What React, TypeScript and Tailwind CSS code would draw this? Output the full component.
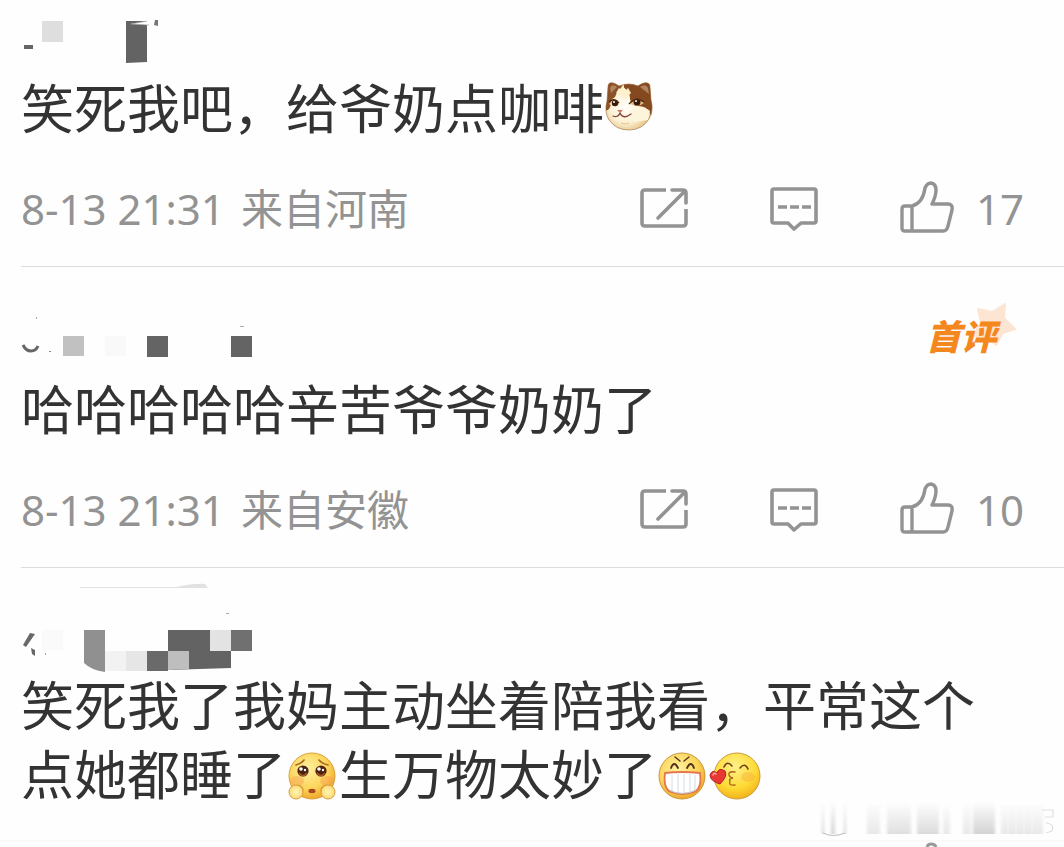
import React from 'react'

const emojiClass = 'inline-block w-[53px] h-[53px] align-[-8px] overflow-visible'

const catHead =
  'M4 3C4-2 8-3 15 2Q25-2 34 2C41-3 46-2 46 3L47 16Q50 27 45 35Q38 46 25 46Q12 46 5 36Q0 28 3 17Z'

function CatEmoji() {
  return (
    <svg className={emojiClass} viewBox="0 0 53 53" role="img" aria-label="喵喵">
      <defs>
        <radialGradient id="cat-face" cx="0.42" cy="0.52" r="0.55">
          <stop offset="0" stopColor="#fffefa" />
          <stop offset="0.55" stopColor="#fcf1d4" />
          <stop offset="1" stopColor="#dfb770" />
        </radialGradient>
        <clipPath id="cat-head">
          <path d={catHead} />
        </clipPath>
      </defs>
      <g clipPath="url(#cat-head)">
        <rect x="0" y="-4" width="52" height="52" fill="url(#cat-face)" />
        <path d="M0-4H22L16 5Q12 9 11 13L7 16Q8 22 4 26L0 27Z" fill="#8b5128" />
        <path d="M20-4H52V32Q47 33 45 28Q43 22 34 22Q27 22 26 15Q26 8 20 4Z" fill="#84491f" />
        <path d="M6 4Q8-1 13 3L7 9ZM36 3Q42-1 44 4L45 10Z" fill="#b08461" />
        <path d="M12 9L15 4 17 6 19 2 22 6 24 4 27 9 24 12 22 15 17 11Z" fill="#fff0cc" />
        <path d="M26 27Q38 20 46 27L44 36 30 38Z" fill="#fdf4dc" />
      </g>
      <path d={catHead} fill="none" stroke="#9a6b3c" strokeOpacity="0.6" />
      <path d="M5 20Q10 13 15 20Q10 24 5 20Z" fill="#f3d7a6" />
      <path d="M26 20Q33 13 40 19Q34 24 26 20Z" fill="#e8bf85" />
      <circle cx="11" cy="19" r="3.2" fill="#38190b" />
      <circle cx="33" cy="18" r="3.5" fill="#38190b" />
      <circle cx="10" cy="18" r="1" fill="#fff" />
      <circle cx="32" cy="17" r="1.1" fill="#fff" />
      <path d="M5 18Q10 13 15 19M25 20Q32 12 40 18" fill="none" stroke="#4d260f" strokeWidth="1.3" />
      <path d="M13 26H19L16 29Z" fill="#ce7768" />
      <path d="M16 29Q14 34 9 32M16 29Q19 36 27 30" fill="none" stroke="#85483d" strokeWidth="1.3" strokeLinecap="round" />
      <path d="M17 39Q21 41 25 39" fill="none" stroke="#e3c48f" />
    </svg>
  )
}

function YellowGradient({ id }: { id: string }) {
  return (
    <radialGradient id={id} cx="0.42" cy="0.35" r="0.65">
      <stop offset="0" stopColor="#fff0a0" />
      <stop offset="0.65" stopColor="#fcd55a" />
      <stop offset="1" stopColor="#efaa2c" />
    </radialGradient>
  )
}

function PleadingEmoji() {
  return (
    <svg className={emojiClass} viewBox="0 0 53 53" role="img" aria-label="可怜">
      <defs>
        <YellowGradient id="plead-face" />
        <radialGradient id="plead-hand">
          <stop offset="0" stopColor="#fff7b2" />
          <stop offset="1" stopColor="#fbd978" />
        </radialGradient>
      </defs>
      <circle cx="26" cy="26" r="23" fill="url(#plead-face)" stroke="#d9a13a" strokeWidth="1" />
      <ellipse cx="11" cy="31" rx="7" ry="5" fill="#f79255" opacity="0.35" />
      <ellipse cx="41" cy="31" rx="7" ry="5" fill="#f79255" opacity="0.35" />
      <path d="M10 15Q15 14 18 10M33 10Q36 14 42 15" fill="none" stroke="#a66a20" strokeWidth="1.6" strokeLinecap="round" />
      <circle cx="17" cy="21" r="5.6" fill="#4c220e" />
      <circle cx="35" cy="21" r="5.6" fill="#4c220e" />
      <path d="M13 23Q17 28 21 23M31 23Q35 28 39 23" fill="none" stroke="#a65a27" strokeWidth="1.5" />
      <circle cx="15" cy="19" r="1.8" fill="#fff" />
      <circle cx="19" cy="20" r="1.2" fill="#fff" />
      <circle cx="33" cy="19" r="1.8" fill="#fff" />
      <circle cx="37" cy="20" r="1.2" fill="#fff" />
      <ellipse cx="26" cy="41" rx="3.6" ry="2.2" fill="#a94820" />
      <circle cx="10" cy="42" r="7" fill="url(#plead-hand)" stroke="#d99c37" strokeWidth="1" />
      <circle cx="42" cy="42" r="7" fill="url(#plead-hand)" stroke="#d99c37" strokeWidth="1" />
      <path d="M12 35Q18 36 17 41M40 35Q34 36 35 41" fill="none" stroke="#d99c37" strokeWidth="1" />
    </svg>
  )
}

function GrinEmoji() {
  return (
    <svg className={emojiClass} viewBox="0 0 53 53" role="img" aria-label="嘻嘻">
      <defs>
        <YellowGradient id="grin-face" />
      </defs>
      <circle cx="25" cy="26" r="23" fill="url(#grin-face)" stroke="#c9963a" strokeWidth="1" />
      <path d="M18 7L23 11M27 11L32 7" stroke="#5b371a" strokeWidth="1.5" strokeLinecap="round" />
      <path d="M14 18Q17 10 21 18M30 18Q34 10 37 18" fill="none" stroke="#4f2e16" strokeWidth="1.8" strokeLinecap="round" />
      <path d="M8 23Q25 21 43 23Q45 39 37 42Q25 46 14 42Q6 39 8 23Z" fill="#fff" stroke="#e5764e" strokeWidth="1.8" />
      <path d="M15 25V41M21 24V43M27 24V43M33 24V43M38 25V40" stroke="#d5dbe2" strokeWidth="1" />
      <path d="M12 40Q25 47 39 40" fill="none" stroke="#bfc6ca" strokeWidth="1" />
    </svg>
  )
}

function KissEmoji() {
  return (
    <svg className={emojiClass} viewBox="0 0 53 53" role="img" aria-label="亲亲">
      <defs>
        <radialGradient id="kiss-face" cx="0.45" cy="0.3" r="0.7">
          <stop offset="0" stopColor="#fff08a" />
          <stop offset="0.65" stopColor="#fedb35" />
          <stop offset="1" stopColor="#f3b31c" />
        </radialGradient>
      </defs>
      <circle cx="27" cy="26" r="23" fill="url(#kiss-face)" stroke="#c99b36" strokeWidth="1" />
      <ellipse cx="38" cy="27" rx="7" ry="5" fill="#f69440" opacity="0.3" />
      <path d="M14 17Q17 10 22 16M30 18Q35 12 38 19" fill="none" stroke="#704016" strokeWidth="1.6" strokeLinecap="round" />
      <path d="M25 22Q18 21 19 25Q20 28 23 28Q18 29 20 31Q18 36 25 35" fill="none" stroke="#a96418" strokeWidth="1.4" strokeLinecap="round" />
      <path d="M10 34Q0 31 0 25Q2 19 7 23Q9 17 15 21Q18 26 10 34Z" fill="#e83834" stroke="#b71e27" strokeWidth="1" />
      <path d="M3 25Q4 22 6 24" fill="none" stroke="#ffaca0" strokeWidth="1.5" strokeLinecap="round" />
    </svg>
  )
}

function ShareIcon() {
  return (
    <svg className="w-12 h-14" viewBox="0 1 48 56" fill="none" stroke="currentColor" strokeWidth="3.6" aria-hidden>
      <path d="M26 10H5Q2 10 2 13V43Q2 46 5 46H43Q46 46 46 43V29" />
      <path d="M32 10H43Q46 10 46 13V23M45 11L18 38" strokeLinecap="round" />
    </svg>
  )
}

function CommentIcon() {
  return (
    <svg className="w-12 h-14" viewBox="0 1 48 56" fill="none" stroke="currentColor" strokeWidth="3.6" strokeLinejoin="round" aria-hidden>
      <path d="M4 9H44Q46 9 46 11V41Q46 43 44 43H31L24 49L18 43H4Q2 43 2 41V11Q2 9 4 9Z" />
      <path d="M8 27H17M20 27H29M32 27H41" />
    </svg>
  )
}

function LikeIcon() {
  return (
    <svg className="w-[54px] h-14" viewBox="0 2 54 56" fill="none" stroke="currentColor" strokeWidth="3.4" strokeLinejoin="round" aria-hidden>
      <path d="M12 27Q23 24 25 9Q27 4 31 4Q36 5 36 11Q36 17 32 25H48Q53 25 52 31L48 47Q47 52 43 52H5Q2 52 2 49V30Q2 27 5 27ZM12 27V52" />
    </svg>
  )
}

type CommentProps = {
  mask: React.ReactNode
  badge?: React.ReactNode
  meta?: { time: string; from: string; likes: number }
  children: React.ReactNode
}

function Comment({ mask, badge, meta, children }: CommentProps) {
  return (
    <article className="relative ml-[21px]">
      {mask}
      {badge}
      <p className="pr-10 text-[53px] leading-[69px] text-[#333333]">{children}</p>
      {meta && (
        <footer className="flex items-center justify-between border-b border-[#dcdcdc] pt-10 pb-[29px] pr-10 font-['Noto_Sans','Noto_Sans_CJK_SC',sans-serif] text-[42px] leading-[56px] text-[#939393]">
          <div className="flex gap-4 whitespace-nowrap">
            <time>{meta.time}</time>
            <span>{meta.from}</span>
          </div>
          <div className="flex items-center gap-[82px]">
            <button type="button" aria-label="转发">
              <ShareIcon />
            </button>
            <button type="button" aria-label="评论">
              <CommentIcon />
            </button>
            <button type="button" aria-label="赞" className="flex items-center gap-[22px]">
              <LikeIcon />
              <span>{meta.likes}</span>
            </button>
          </div>
        </footer>
      )}
    </article>
  )
}

function FirstBadge() {
  return (
    <div className="absolute top-9 right-12 h-14 w-[90px]">
      <svg className="absolute right-0 top-0 h-12 w-12" viewBox="0 0 48 48" aria-hidden>
        <path d="M10 6L24 9L37 1L36 15L47 26L35 30L28 42L18 33L5 33L13 20Z" fill="#fde5d3" stroke="#fde5d3" strokeWidth="2" strokeLinejoin="round" />
      </svg>
      <span className="absolute left-0 top-3 text-[35px] leading-10 font-black italic whitespace-nowrap text-[#f5871f]">首评</span>
    </div>
  )
}

// user names are hidden behind mosaic blocks
function MaskOne() {
  return (
    <svg className="block h-[72px] w-[300px]" viewBox="21 0 300 72" aria-hidden>
      <rect x="42" y="21" width="21" height="21" fill="#dedede" />
      <rect x="24" y="45" width="9" height="4" fill="#666" />
      <path d="M126 21H147L130 24L147 25V62L126 63Z" fill="#636363" />
      <path d="M147 21L131 24L149 25" fill="none" stroke="#999" strokeWidth="0.6" />
      <path d="M155 20H158V26L154 25Z" fill="#777" />
    </svg>
  )
}

function MaskTwo() {
  return (
    <svg className="block h-[106px] w-[300px]" viewBox="21 267 300 106" aria-hidden>
      <path d="M23 345Q26 351 31 351Q36 351 38 346" fill="none" stroke="#666" strokeWidth="3" />
      <rect x="36" y="317" width="1" height="2" fill="#aaa" />
      <rect x="49" y="351" width="2" height="1" fill="#888" />
      <rect x="63" y="336" width="21" height="20" fill="#c1c1c1" />
      <rect x="105" y="336" width="21" height="20" fill="#f9f9f9" />
      <rect x="147" y="336" width="21" height="21" fill="#646464" />
      <rect x="231" y="336" width="21" height="21" fill="#646464" />
      <rect x="240" y="326" width="4" height="1" fill="#aaa" />
    </svg>
  )
}

function MaskThree() {
  return (
    <svg className="block h-[101px] w-[300px]" viewBox="21 568 300 101" overflow="visible" aria-hidden>
      <path d="M80 587H176Q195 583 205 584L208 588H80Z" fill="#e2e2e2" />
      <path d="M30 633L35 634L26 647L23 645ZM31 648L35 650V656L32 654Z" fill="#686868" />
      <rect x="45" y="653" width="1" height="2" fill="#aaa" />
      <rect x="42" y="630" width="21" height="20" fill="#fafafa" />
      <path d="M84 630H105V672Q91 670 84 663Z" fill="#909090" />
      <rect x="105" y="651" width="21" height="20" fill="#f2f2f2" />
      <rect x="126" y="651" width="21" height="20" fill="#e6e6e6" />
      <rect x="147" y="651" width="21" height="20" fill="#6a6a6a" />
      <path d="M168 630H210V651H231V668L168 670Z" fill="#636363" />
      <path d="M168 651H189V669L168 670Z" fill="#bebebe" />
      <rect x="210" y="630" width="21" height="21" fill="#e3e3e3" />
      <path d="M231 630H252V651H231Z" fill="#707070" />
      <rect x="226" y="613" width="3" height="1" fill="#aaa" />
    </svg>
  )
}

function Watermark() {
  return (
    <svg className="block h-12 w-full" viewBox="0 0 284 48" preserveAspectRatio="xMaxYMid meet" overflow="visible" aria-hidden>
      <defs>
        <linearGradient id="smear" x1="0" y1="0" x2="0" y2="1">
          <stop offset="0" stopColor="#c4c4c4" stopOpacity="0" />
          <stop offset="1" stopColor="#c4c4c4" stopOpacity="0.75" />
        </linearGradient>
        <filter id="soft" x="-10%" y="-10%" width="120%" height="120%">
          <feGaussianBlur stdDeviation="1.6 0.4" />
        </filter>
      </defs>
      <g fill="url(#smear)" filter="url(#soft)">
        <rect x="42" y="3" width="2" height="32" />
        <rect x="51" y="3" width="4" height="32" />
        <rect x="64" y="3" width="2" height="32" />
        <rect x="87" y="3" width="13" height="32" opacity="0.5" />
        <rect x="107" y="3" width="24" height="32" opacity="0.7" />
        <rect x="137" y="3" width="22" height="32" opacity="0.8" />
        <rect x="163" y="3" width="7" height="32" opacity="0.5" />
        <rect x="183" y="3" width="8" height="32" opacity="0.5" />
        <rect x="193" y="3" width="22" height="32" />
        <rect x="221" y="3" width="42" height="32" opacity="0.5" />
      </g>
      <path d="M43 34Q53 39 65 34" fill="none" stroke="#bbb" />
      <path d="M228 12V35M236 12V35M244 12V35M252 12V35" stroke="#fff" strokeWidth="1" opacity="0.4" />
      <path d="M262 11H273V18H265M266 24Q275 25 272 32L266 34" fill="none" stroke="#e0e0e0" strokeWidth="1.2" />
      <path d="M-800 42H284" stroke="#f5f5f5" />
      <path d="M147 48Q148 45 151 45Q155 45 156 48" fill="none" stroke="#999" strokeWidth="3" />
    </svg>
  )
}

export default function App() {
  return (
    <main
      lang="zh-CN"
      className="overflow-hidden bg-[#fefefe] font-['Noto_Sans_CJK_SC',sans-serif]"
    >
      <Comment mask={<MaskOne />} meta={{ time: '8-13 21:31', from: '来自河南', likes: 17 }}>
        笑死我吧，给爷奶点咖啡
        <CatEmoji />
      </Comment>
      <Comment
        mask={<MaskTwo />}
        badge={<FirstBadge />}
        meta={{ time: '8-13 21:31', from: '来自安徽', likes: 10 }}
      >
        哈哈哈哈哈辛苦爷爷奶奶了
      </Comment>
      <Comment mask={<MaskThree />}>
        笑死我了我妈主动坐着陪我看，平常这个点她都睡了
        <PleadingEmoji />
        生万物太妙了
        <GrinEmoji />
        <KissEmoji />
      </Comment>
      <div className="-mt-2">
        <Watermark />
      </div>
    </main>
  )
}
